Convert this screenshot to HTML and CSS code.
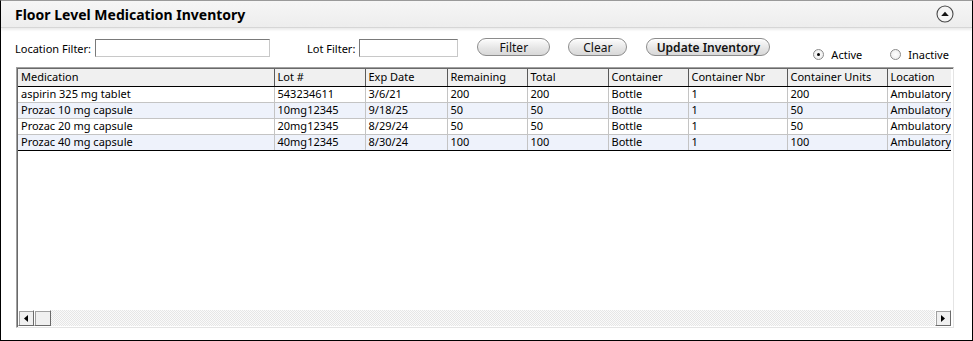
FILE: index.html
```html
<!DOCTYPE html>
<html>
<head>
<meta charset="utf-8">
<link rel="stylesheet" href="styles.css">
</head>
<body>
<div class="panel">
  <div class="titlebar">
    <span class="title">Floor Level Medication Inventory</span>
    <span class="collapse">
      <svg width="18" height="18" viewBox="0 0 18 18"><circle cx="9" cy="9" r="8" fill="#f4f4f4" stroke="#4a4a4a" stroke-width="1.1"/><path d="M5.2 11 L9 6.8 L12.8 11 Z" fill="#111"/></svg>
    </span>
  </div>
  <div class="controls">
    <label class="lbl">Location Filter:</label>
    <input class="txt loc" type="text">
    <label class="lbl lot-lbl">Lot Filter:</label>
    <input class="txt lot" type="text">
    <button class="btn filter">Filter</button>
    <button class="btn clear">Clear</button>
    <button class="btn update">Update Inventory</button>
    <span class="radio active-r"><span class="dot on"></span>Active</span>
    <span class="radio inactive-r"><span class="dot"></span>Inactive</span>
  </div>
  <div class="grid">
    <div class="grid-body">
      <table>
        <colgroup>
          <col style="width:256px"><col style="width:91px"><col style="width:82px"><col style="width:80px"><col style="width:81px"><col style="width:80px"><col style="width:99px"><col style="width:100px"><col style="width:64px">
        </colgroup>
        <thead>
          <tr><th>Medication</th><th>Lot #</th><th>Exp Date</th><th>Remaining</th><th>Total</th><th>Container</th><th>Container Nbr</th><th>Container Units</th><th>Location</th></tr>
        </thead>
        <tbody>
          <tr><td>aspirin 325 mg tablet</td><td>543234611</td><td>3/6/21</td><td>200</td><td>200</td><td>Bottle</td><td>1</td><td>200</td><td>Ambulatory</td></tr>
          <tr class="alt"><td>Prozac 10 mg capsule</td><td>10mg12345</td><td>9/18/25</td><td>50</td><td>50</td><td>Bottle</td><td>1</td><td>50</td><td>Ambulatory</td></tr>
          <tr><td>Prozac 20 mg capsule</td><td>20mg12345</td><td>8/29/24</td><td>50</td><td>50</td><td>Bottle</td><td>1</td><td>50</td><td>Ambulatory</td></tr>
          <tr class="alt last"><td>Prozac 40 mg capsule</td><td>40mg12345</td><td>8/30/24</td><td>100</td><td>100</td><td>Bottle</td><td>1</td><td>100</td><td>Ambulatory</td></tr>
        </tbody>
      </table>
    </div>
    <div class="hscroll">
      <span class="sbtn"><svg width="4" height="7" viewBox="0 0 4 7"><path d="M4 0 L0 3.5 L4 7 Z" fill="#000"/></svg></span>
      <span class="thumb"></span>
      <span class="track"></span>
      <span class="sbtn"><svg width="4" height="7" viewBox="0 0 4 7"><path d="M0 0 L4 3.5 L0 7 Z" fill="#000"/></svg></span>
    </div>
  </div>
</div>
</body>
</html>
```

FILE: styles.css
```css
* { box-sizing: border-box; }
html, body { margin: 0; padding: 0; background: #fff; }
body { font-family: "Noto Sans", "Open Sans", sans-serif; font-size: 11px; color: #000; }

.panel {
  width: 973px;
  height: 341px;
  border: 1px solid #000;
  border-top-color: #9a9a9a;
  background: #fff;
  display: flex;
  flex-direction: column;
}

.titlebar {
  height: 27px;
  display: flex;
  align-items: center;
  justify-content: space-between;
  padding: 0 18px 0 14px;
  background: linear-gradient(#f6f6f6, #ededed);
  border-bottom: 1px solid #d6d6d6;
  box-shadow: 0 2px 2px rgba(0,0,0,0.08);
}
.title { font-weight: 700; font-size: 14px; letter-spacing: 0; }
.collapse { display: flex; width: 18px; height: 18px; }

.controls {
  display: flex;
  align-items: flex-start;
  margin-top: 10px;
  padding-left: 14px;
  height: 29px;
}
.lbl { margin-top: 3px; font-size: 11px; }
.txt {
  height: 18px;
  margin: 1px 0 0 4px;
  border: 1px solid #7a7a7a;
  border-right-color: #c8c8c8;
  border-bottom-color: #c8c8c8;
  padding: 0;
  background: #fff;
}
.loc { width: 175px; }
.lot-lbl { margin-left: 37px; }
.lot { width: 99px; }

.btn {
  height: 18px;
  margin-top: 0;
  padding: 0;
  border: 1px solid #8c8c8c;
  border-radius: 9px;
  background: linear-gradient(#fdfdfd, #e6e6e6 55%, #d8d8d8);
  font-family: inherit;
  font-size: 12px;
  line-height: 15px;
  color: #111;
  box-shadow: inset 0 1px 0 #fff;
}
.filter { width: 73px; margin-left: 19px; }
.clear { width: 59px; margin-left: 18px; }
.update { width: 124px; margin-left: 19px; font-weight: 600; }

.radio {
  display: flex;
  align-items: center;
  margin-top: 9px;
  font-size: 11px;
}
.active-r { margin-left: 43px; }
.inactive-r { margin-left: 28px; }
.dot {
  width: 11px;
  height: 11px;
  border-radius: 50%;
  border: 1px solid #8a8a8a;
  background: radial-gradient(#fff, #e8e8e8);
  margin-right: 7px;
  position: relative;
}
.dot.on::after {
  content: "";
  position: absolute;
  left: 3px; top: 3px;
  width: 3px; height: 3px;
  border-radius: 50%;
  background: #000;
}

.grid {
  margin-left: 15px;
  width: 938px;
  height: 261px;
  border: 1px solid #a0a0a0;
  border-right-color: #e4e4e4;
  border-bottom-color: #e4e4e4;
  box-shadow: inset 1px 1px 0 #696969;
  padding: 1px 0 1px 1px;
  display: flex;
  flex-direction: column;
}
.grid-body { flex: 1; overflow: hidden; }

table {
  border-collapse: collapse;
  table-layout: fixed;
  width: 933px;
}
th, td {
  text-align: left;
  font-weight: 400;
  padding: 0 0 0 3px;
  white-space: nowrap;
  overflow: hidden;
  line-height: 14px;
  height: 16px;
}
th {
  background: #f0f0f0;
  border-right: 1px solid #5a5a5a;
  border-bottom: 1px solid #000;
  height: 17px;
}
th:last-child { border-right: none; }
td {
  padding-bottom: 1px;
  border-right: 1px solid #c4c4c4;
  border-bottom: 1px solid #c4c4c4;
}
td:last-child { border-right: none; }
tr.alt td { background: #eef2fb; }
tr.last td { border-bottom: 1px solid #000; }

.hscroll {
  height: 16px;
  width: 933px;
  display: flex;
}
.sbtn, .thumb {
  width: 16px;
  height: 16px;
  background: #f0f0f0;
  border: 1px solid #fff;
  border-right-color: #6a6a6a;
  border-bottom-color: #6a6a6a;
  box-shadow: 1px 1px 0 #a0a0a0 inset;
  display: flex;
  align-items: center;
  justify-content: center;
}
.thumb { width: 17px; }
.track {
  flex: 1;
  background: repeating-conic-gradient(#e6e6e6 0 25%, #fafafa 0 50%) 0 0 / 2px 2px;
}
```
